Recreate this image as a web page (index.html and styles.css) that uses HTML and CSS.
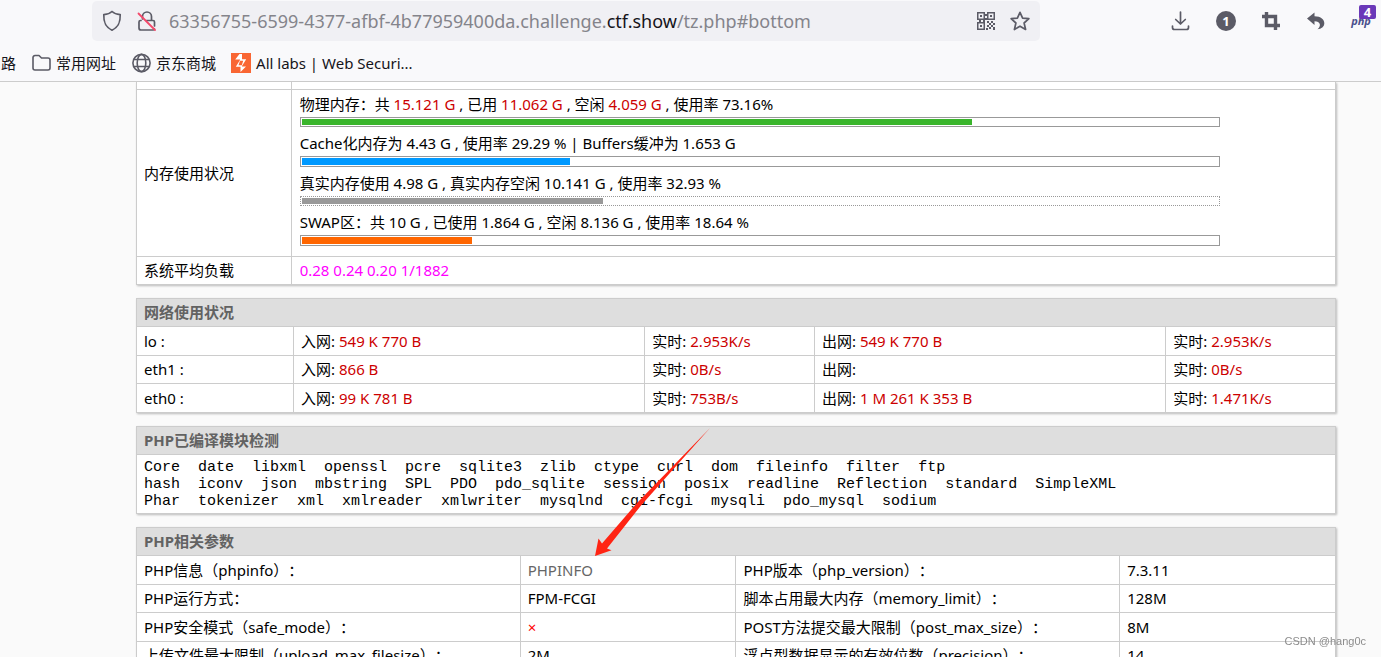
FILE: index.html
```html
<!DOCTYPE html>
<html lang="zh-CN">
<head>
<meta charset="utf-8">
<title>PHP探针</title>
<link rel="stylesheet" href="styles.css">
</head>
<body>
<header class="chrome">
  <div class="toolbar">
    <div class="urlbar">
      <button class="icon-btn" type="button" aria-label="Shield">
        <svg width="20" height="22" viewBox="0 0 20 22" fill="none" stroke="#5b5b66" stroke-width="1.7" stroke-linejoin="round"><path d="M10 1.5C8 3.4 5 4.3 1.8 4.6C1.6 10 2 16.500 10 20.200C18 16.500 18.400 10 18.200 4.600C15 4.300 12 3.400 10 1.500Z"/></svg>
      </button>
      <button class="icon-btn" type="button" aria-label="Connection not secure">
        <svg width="20" height="22" viewBox="0 0 20 22" fill="none" stroke-linecap="round"><path d="M5.500 9V6.500a4.500 4.500 0 0 1 9 0V10M4 10.500H3.500a1.500 1.500 0 0 0-1.500 1.500v6a2 2 0 0 0 2 2h12a1.500 1.500 0 0 0 1.500-1M9.500 10.500h6.500a1.500 1.500 0 0 1 1.500 1.500v4" stroke="#5b5b66" stroke-width="1.700"/><path d="M1.500 3.500L18 20" stroke="#f3496b" stroke-width="1.800"/></svg>
      </button>
      <div class="url" role="textbox" aria-label="Address" contenteditable="true" spellcheck="false">63356755-6599-4377-afbf-4b77959400da.challenge.<span class="domain">ctf.show</span>/tz.php#bottom</div>
      <button class="icon-btn" type="button" aria-label="QR code">
        <svg width="18" height="18" viewBox="0 0 18 18" fill="#5b5b66"><path fill-rule="evenodd" d="M0 0h8v8H0zM1.500 1.500v5h5v-5zM10 0h8v8h-8zM11.500 1.500v5h5v-5zM0 10h8v8H0zM1.500 11.500v5h5v-5z"/><path d="M3 3h2v2H3zM13 3h2v2h-2zM3 13h2v2H3zM8 2h2v2H8zM8 6h2v2H8zM2 8h2v2H2zM6 8h2v2H6zM10 9h2v2h-2zM14 9h2v2h-2zM12 11h2v2h-2zM16 11h2v2h-2zM10 13h2v2h-2zM14 13h2v2h-2zM12 15h2v2h-2zM16 15h2v3h-2zM9 16h2v2H9z"/></svg>
      </button>
      <button class="icon-btn" type="button" aria-label="Bookmark this page">
        <svg width="20" height="20" viewBox="0 0 20 20" fill="none" stroke="#5b5b66" stroke-width="1.700" stroke-linejoin="round"><path d="M10 1.300L12.600 7.200L18.900 7.700L14.100 12L15.600 18.500L10 15.200L4.400 18.500L5.900 12L1.100 7.700L7.400 7.200Z"/></svg>
      </button>
    </div>
    <nav class="tools" aria-label="Toolbar">
      <button class="tool" type="button" aria-label="Downloads">
        <svg width="20" height="20" viewBox="0 0 20 20" fill="none" stroke="#5b5b66" stroke-width="1.700" stroke-linecap="round" stroke-linejoin="round"><path d="M9.500 1V13M4.700 8.500L9.500 13L14.300 8.500M1.500 15V16.500a2 2 0 0 0 2 2H15.500a2 2 0 0 0 2-2V15"/></svg>
      </button>
      <button class="tool" type="button" aria-label="Notifications"><span class="count">1</span></button>
      <button class="tool" type="button" aria-label="Crop">
        <svg width="18" height="18" viewBox="0 0 18 18" fill="none" stroke="#5b5b66" stroke-width="3.400"><path d="M0 4.500H13.500V18M4.500 0V13.500H18"/></svg>
      </button>
      <button class="tool" type="button" aria-label="Undo">
        <svg width="18" height="18" viewBox="0 0 18 18" fill="#5b5b66"><path d="M0 6.500L7.500 0.500V4.200C14 4.200 17.500 7.500 17.300 11.500C17.200 14.500 14.500 17 10.500 17.200C14.500 14 13.500 9.500 7.500 9.300V13Z"/></svg>
      </button>
      <button class="tool php" type="button" aria-label="PHP extension">php<span class="badge">4</span></button>
    </nav>
  </div>
  <nav class="bookmarks" aria-label="Bookmarks">
    <a class="bookmark" href="#">路</a>
    <a class="bookmark" href="#"><svg width="20" height="18" viewBox="0 0 20 18" fill="none" stroke="#5b5b66" stroke-width="1.600" stroke-linejoin="round"><path d="M2 3.500a2 2 0 0 1 2-2h4l2.500 2.500h6.500a2 2 0 0 1 2 2v8a2 2 0 0 1-2 2H4a2 2 0 0 1-2-2z"/></svg>常用网址</a>
    <a class="bookmark" href="#"><svg width="20" height="20" viewBox="0 0 20 20" fill="none" stroke="#5b5b66" stroke-width="1.600"><circle cx="10.500" cy="10" r="8.600"/><ellipse cx="10.500" cy="10" rx="4.300" ry="8.600"/><path d="M3 6.500h15M3 13.500h15"/></svg>京东商城</a>
    <a class="bookmark" href="#"><svg width="20" height="20" viewBox="0 0 20 20"><path fill="#f96633" d="M0 0h20v20H0z"/><path fill="#fff" d="M8.500 1H11V6.200H15.200L11 13V13.600H15L9.500 19V13.800H4.800L9 7V6.600H4.200Z"/><path fill="#f96633" d="M9 7.700H12.200L10.800 12.300H7.500Z"/></svg>All labs | Web Securi...</a>
  </nav>
</header>

<main class="page">
  <table class="grid memory">
    <tbody>
      <tr class="spacer"><td></td><td></td></tr>
      <tr>
        <td>内存使用状况</td>
        <td class="usage">
          <div class="stat">
            <p>物理内存：共 <b>15.121 G</b> , 已用 <b>11.062 G</b> , 空闲 <b>4.059 G</b> , 使用率 73.16%</p>
            <div class="bar"><div class="fill green" style="width:73.16%"></div></div>
          </div>
          <div class="stat">
            <p>Cache化内存为 4.43 G , 使用率 29.29 % | Buffers缓冲为 1.653 G</p>
            <div class="bar"><div class="fill blue" style="width:29.29%"></div></div>
          </div>
          <div class="stat">
            <p>真实内存使用 4.98 G , 真实内存空闲 10.141 G , 使用率 32.93 %</p>
            <div class="bar dotted"><div class="fill gray" style="width:32.93%"></div></div>
          </div>
          <div class="stat">
            <p>SWAP区：共 10 G , 已使用 1.864 G , 空闲 8.136 G , 使用率 18.64 %</p>
            <div class="bar"><div class="fill orange" style="width:18.64%"></div></div>
          </div>
        </td>
      </tr>
      <tr><td>系统平均负载</td><td class="load">0.28 0.24 0.20 1/1882</td></tr>
    </tbody>
  </table>

  <table class="grid network">
    <colgroup><col class="name"><col class="total"><col class="rate"><col class="total"><col class="rate"></colgroup>
    <tbody>
      <tr><th colspan="5">网络使用状况</th></tr>
      <tr><td>lo :</td><td>入网: <b>549 K 770 B</b></td><td>实时: <b>2.953K/s</b></td><td>出网: <b>549 K 770 B</b></td><td>实时: <b>2.953K/s</b></td></tr>
      <tr><td>eth1 :</td><td>入网: <b>866 B</b></td><td>实时: <b>0B/s</b></td><td>出网:</td><td>实时: <b>0B/s</b></td></tr>
      <tr><td>eth0 :</td><td>入网: <b>99 K 781 B</b></td><td>实时: <b>753B/s</b></td><td>出网: <b>1 M 261 K 353 B</b></td><td>实时: <b>1.471K/s</b></td></tr>
    </tbody>
  </table>

  <table class="grid">
    <tbody>
      <tr><th>PHP已编译模块检测</th></tr>
      <tr><td class="modules">Core  date  libxml  openssl  pcre  sqlite3  zlib  ctype  curl  dom  fileinfo  filter  ftp
hash  iconv  json  mbstring  SPL  PDO  pdo_sqlite  session  posix  readline  Reflection  standard  SimpleXML
Phar  tokenizer  xml  xmlreader  xmlwriter  mysqlnd  cgi-fcgi  mysqli  pdo_mysql  sodium</td></tr>
    </tbody>
  </table>

  <table class="grid params">
    <colgroup><col class="key"><col class="value"><col class="key"><col class="value"></colgroup>
    <tbody>
      <tr><th colspan="4">PHP相关参数</th></tr>
      <tr><td>PHP信息（phpinfo）：</td><td><a class="info" href="#">PHPINFO</a></td><td>PHP版本（php_version）：</td><td>7.3.11</td></tr>
      <tr><td>PHP运行方式：</td><td>FPM-FCGI</td><td>脚本占用最大内存（memory_limit）：</td><td>128M</td></tr>
      <tr><td>PHP安全模式（safe_mode）：</td><td class="no">×</td><td>POST方法提交最大限制（post_max_size）：</td><td>8M</td></tr>
      <tr><td>上传文件最大限制（upload_max_filesize）：</td><td>2M</td><td>浮点型数据显示的有效位数（precision）：</td><td>14</td></tr>
    </tbody>
  </table>

  <svg class="arrow" width="116" height="128" viewBox="0 0 116 128" aria-hidden="true"><path fill="#ff2413" d="M0 128L3.500 110.500L7 115.500L42 75L115 0L46 77.500L12 120.500L16.500 122.300Z"/></svg>
</main>
<div class="watermark">CSDN @hang0c</div>
</body>
</html>
```

FILE: styles.css
```css
* {
  box-sizing: border-box;
}

html,
body {
  height: 100%;
  overflow: hidden;
}

body {
  margin: 0;
  background: #fafafa;
  color: #000;
  font: 15px/20px "Noto Sans", "Noto Sans CJK SC", sans-serif;
  text-spacing-trim: space-all;
}

button {
  padding: 0;
  border: 0;
  background: none;
  font: inherit;
}

svg {
  display: block;
  flex: none;
}

/* Browser chrome */
.chrome {
  background: #f9f9fb;
  border-bottom: 1px solid #ccc;
}

.toolbar {
  display: flex;
  justify-content: space-between;
  padding: 1px 0 0 92px;
}

.urlbar {
  display: flex;
  flex: 1;
  align-items: center;
  height: 40px;
  margin-right: 121px;
  padding: 0 10px;
  gap: 15px;
  border-radius: 5px;
  background: #f0f0f4;
}

.url {
  flex: 1;
  margin-left: -3px;
  color: #84848b;
  font-size: 18px;
  line-height: 24px;
  white-space: nowrap;
  overflow: hidden;
}

.domain {
  color: #15141a;
}

.tools {
  display: flex;
  gap: 5px;
}

.tool {
  display: flex;
  position: relative;
  align-items: center;
  justify-content: center;
  width: 40px;
  height: 40px;
}

.count {
  width: 20px;
  border-radius: 50%;
  background: #5b5b66;
  color: #fff;
  font-size: 13px;
  font-weight: 700;
}

.php {
  color: #4a508c;
  font-size: 11px;
  font-style: italic;
  font-weight: 700;
}

.badge {
  position: absolute;
  top: 4px;
  right: 5px;
  width: 17px;
  border-radius: 2px;
  background: #6a38b8;
  color: #fff;
  font-size: 13px;
  font-style: normal;
  line-height: 14px;
}

.bookmarks {
  display: flex;
  align-items: center;
  gap: 15px;
  height: 40px;
  padding: 4px 0 0 1px;
}

.bookmark {
  display: flex;
  align-items: center;
  gap: 5px;
  color: #15141a;
  text-decoration: none;
}

/* Status page */
.page {
  position: relative;
  display: flex;
  flex-direction: column;
  gap: 13px;
  padding: 0 45px 0 136px;
}

.grid {
  width: 100%;
  border-collapse: collapse;
  table-layout: fixed;
  background: #fff;
  box-shadow: 1px 1px 2px #bbb;
}

.grid tr {
  height: 28px;
}

.grid tr:nth-child(even) {
  height: 29px;
}

.grid th,
.grid td {
  padding: 0 7px;
  border: 1px solid #ccc;
  text-align: left;
  white-space: nowrap;
}

.grid th {
  background: #dedede;
  color: #626262;
}

.grid b {
  color: #c00;
  font-weight: 400;
}

.memory td:first-child {
  width: 12.9%;
}

.memory .spacer {
  height: 7px;
}

.memory .spacer td {
  border-top: 0;
}

.grid .usage,
.grid .load {
  padding-left: 8px;
}

.grid .usage {
  padding-top: 4px;
  padding-bottom: 10px;
}

.stat p {
  margin: 0 0 3px;
}

.stat + .stat {
  margin-top: 6px;
}

.bar {
  display: flex;
  width: 89.5%;
  height: 10px;
  padding: 1px;
  border: 1px solid #999;
}

.stat:nth-child(even) .bar {
  height: 11px;
}

.dotted {
  border-style: dotted;
}

.green {
  background: #3ab52c;
}

.blue {
  background: #09f;
}

.gray {
  background: #999;
}

.orange {
  background: #f60;
}

.grid .load {
  color: #f0f;
}

.network .name {
  width: 13.1%;
}

.network .total {
  width: 29.3%;
}

.network .rate {
  width: 14.15%;
}

.grid .modules {
  padding: 4px 7px 3px;
  font: 15px/17px "Liberation Mono", monospace;
  white-space: pre;
}

.params .key {
  width: 32%;
}

.params .value {
  width: 18%;
}

.info {
  color: #666;
  text-decoration: none;
}

.grid .no {
  color: #f00;
}

.arrow {
  position: absolute;
  top: 346px;
  left: 595px;
}

.watermark {
  position: fixed;
  right: 15px;
  bottom: 6px;
  color: #8c8c8c;
  font: 11px/20px "Liberation Sans", sans-serif;
}
```
